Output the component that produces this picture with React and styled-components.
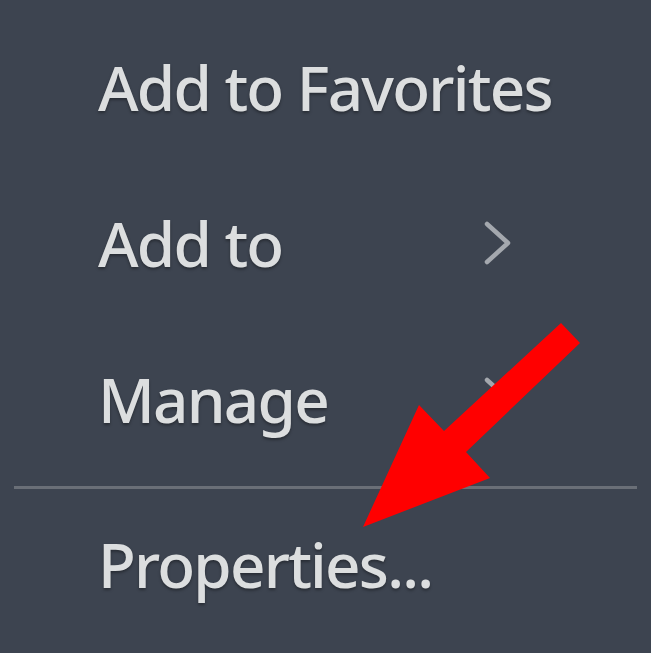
import React from "react";
import styled, { createGlobalStyle } from "styled-components";

const GlobalStyle = createGlobalStyle`
  html, body {
    margin: 0;
    padding: 0;
    background: #3d4450;
    overflow: hidden;
  }
`;

const items = [
  { label: "Add to Favorites" },
  { label: "Add to", sub: true },
  { label: "Manage", sub: true },
];

const App = () => {
  return (
    <>
      <GlobalStyle />
      <Menu>
        {items.map((item) => (
          <Item key={item.label}>
            <Label>{item.label}</Label>
            {item.sub && (
              <Chevron viewBox="0 0 30 44">
                <polyline points="4,3 25,22 4,41" />
              </Chevron>
            )}
          </Item>
        ))}
        <Separator />
        <Item last>
          <Label>Properties...</Label>
        </Item>
        <Arrow viewBox="0 0 651 653">
          <polygon points="561,323 580,343 466,452 490,478 363,527 419,405 444,431" />
        </Arrow>
      </Menu>
    </>
  );
};

export default App;

const Menu = styled.div`
  position: relative;
  width: 651px;
  height: 653px;
  box-sizing: border-box;
  padding: 9px 14px 0 14px;
  display: flex;
  flex-direction: column;
  font-family: "Noto Sans", "Open Sans", sans-serif;
`;

const Item = styled.div`
  height: ${(p) => (p.last ? 150 : 156)}px;
  display: flex;
  align-items: center;
  padding-left: 84px;
  padding-right: 124px;
  justify-content: space-between;
`;

const Label = styled.span`
  color: #dcdedf;
  font-size: 62px;
  font-weight: 500;
  letter-spacing: -1.8px;
  line-height: 1;
  white-space: nowrap;
  text-shadow: 0 2px 3px rgba(0, 0, 0, 0.35);
`;

const Chevron = styled.svg`
  width: 30px;
  height: 44px;
  fill: none;
  stroke: #a4a8ae;
  stroke-width: 4.5;
  stroke-linecap: round;
  stroke-linejoin: round;
`;

const Separator = styled.div`
  height: 3px;
  margin-top: 9px;
  background: #6a6f77;
`;

const Arrow = styled.svg`
  position: absolute;
  left: 0;
  top: 0;
  width: 651px;
  height: 653px;
  fill: #ff0000;
`;
